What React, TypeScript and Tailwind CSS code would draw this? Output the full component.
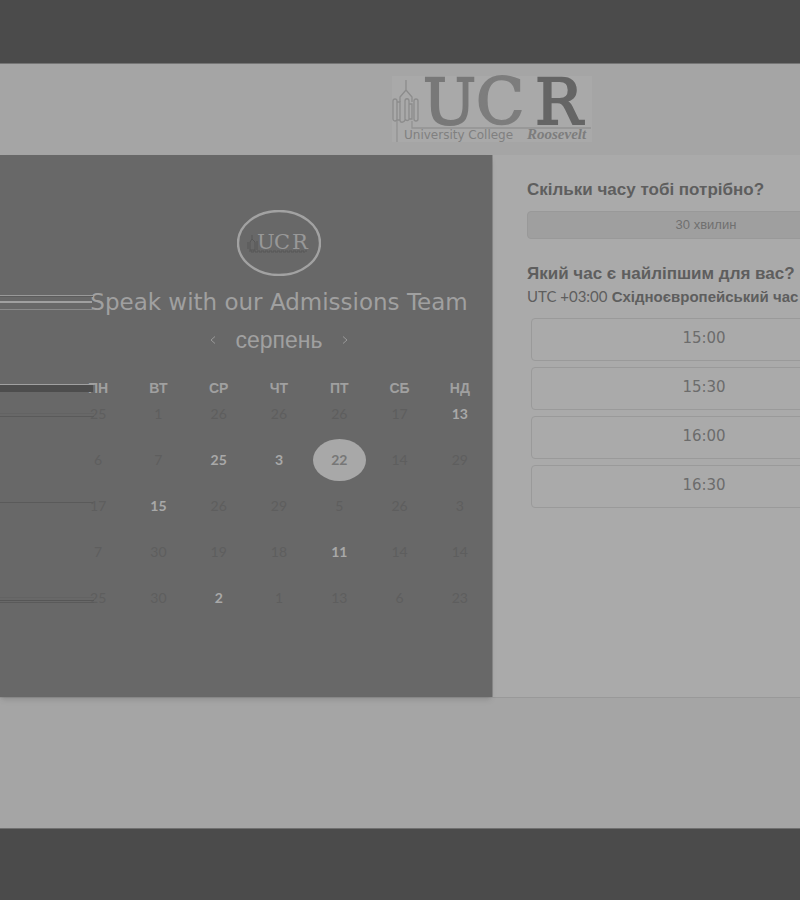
type Day = { n: number; on?: boolean; selected?: boolean };

const dayNames = ["ПН", "ВТ", "СР", "ЧТ", "ПТ", "СБ", "НД"];

const weeks: Day[][] = [
  [{ n: 25 }, { n: 1 }, { n: 26 }, { n: 26 }, { n: 26 }, { n: 17 }, { n: 13, on: true }],
  [{ n: 6 }, { n: 7 }, { n: 25, on: true }, { n: 3, on: true }, { n: 22, selected: true }, { n: 14 }, { n: 29 }],
  [{ n: 17 }, { n: 15, on: true }, { n: 26 }, { n: 29 }, { n: 5 }, { n: 26 }, { n: 3 }],
  [{ n: 7 }, { n: 30 }, { n: 19 }, { n: 18 }, { n: 11, on: true }, { n: 14 }, { n: 14 }],
  [{ n: 25 }, { n: 30 }, { n: 2, on: true }, { n: 1 }, { n: 13 }, { n: 6 }, { n: 23 }],
];

const times = ["15:00", "15:30", "16:00", "16:30"];

function Logo() {
  return (
    <svg className="overflow-visible" width="200" height="66" viewBox="0 0 200 66" role="img" aria-label="University College Roosevelt">
      <rect width="200" height="66" fill="#a9a9a9" />
      <g fill="none" stroke="#8c8c8c" strokeWidth="1.3">
        <path d="M14 4v10M14 14l-6 7v5M14 14l6 7v5" />
        <rect x="1" y="23" width="4" height="22" rx="2" />
        <path d="M5 26h3v18H5M8 44c0 3 4 3 5 0V25c0-3 4-3 4 0v18c0 2-3 2-4 0M17 28h3v15h-3" />
        <rect x="22" y="23" width="4" height="22" rx="2" />
        <path d="M5 45v21M20 45v7h179" stroke="#929292" />
      </g>
      <g fontFamily="'DejaVu Serif', serif" fontSize="63" strokeWidth="2">
        <text x="31" y="48" fill="#787878" stroke="#787878">U</text>
        <text x="84" y="48" fill="#7d7d7d" stroke="#7d7d7d">C</text>
        <text x="143" y="48" fill="#656565" stroke="#656565">R</text>
      </g>
      <text x="12" y="63" fontFamily="'DejaVu Sans', sans-serif" fontSize="12" fill="#808080">University College</text>
      <text x="135" y="63" fontFamily="'Liberation Serif', serif" fontStyle="italic" fontWeight="700" fontSize="15" fill="#7d7d7d">Roosevelt</text>
    </svg>
  );
}

function Badge() {
  return (
    <svg width="84" height="66" viewBox="0 0 84 66" role="img" aria-label="UCR">
      <ellipse cx="42" cy="33" rx="41" ry="32" fill="none" stroke="#a2a2a2" strokeWidth="2.4" />
      <g fill="none" stroke="#575757" strokeWidth="1">
        <path d="M15 25v4l-2 3v8h5v-8l-3-3M11 32v7M20 31v9" />
        <path d="M12 41h58M14 42h54" strokeDasharray="3 1" />
      </g>
      <g fontFamily="'DejaVu Serif', serif" fontSize="21" fill="#989898">
        <text x="20" y="39">U</text>
        <text x="37" y="39">C</text>
        <text x="55" y="39">R</text>
      </g>
    </svg>
  );
}

function Streaks() {
  return (
    <svg className="absolute left-0 top-0" width="100" height="460" aria-hidden="true">
      <g strokeWidth="1" fill="none">
        <path d="M0 140.500h93" stroke="#999999" />
        <path d="M0 141.500h93" stroke="#5c5c5c" />
        <path d="M0 147h92" stroke="#a0a0a0" strokeWidth="2" />
        <path d="M0 154.500h93" stroke="#8a8a8a" />
        <path d="M0 229.500h94" stroke="#a0a0a0" />
        <path d="M0 233.500h93" stroke="#4d4d4d" strokeWidth="7" />
        <path d="M0 261.500h94M0 347.500h93M0 447.500h94" stroke="#5a5a5a" />
        <path d="M0 258.500h94M0 442.500h94" stroke="#636363" />
        <path d="M0 445.500h94" stroke="#565656" />
      </g>
    </svg>
  );
}

function DayButton({ n, on, selected }: Day) {
  if (selected) {
    return (
      <button aria-pressed="true" className="-my-2 inline-flex h-[42px] w-[53px] items-center justify-center rounded-[50%] bg-[#a8a8a8] font-bold text-[#777777]">
        {n}
      </button>
    );
  }
  return (
    <button disabled={!on} className={on ? "h-[26px] w-8 font-bold text-[#a8a8a8]" : "h-[26px] w-8 text-[#5e5e5e]"}>
      {n}
    </button>
  );
}

export default function App() {
  return (
    <div className="flex min-h-screen flex-col overflow-x-hidden bg-[#4b4b4b] font-['Liberation_Sans',sans-serif]">
      <div className="h-[63px]" />
      <header className="flex h-[92px] justify-center border-t border-[#757575] bg-[#a5a5a5] pl-[184px] pt-3">
        <Logo />
      </header>
      <main className="flex h-[543px] border-b border-[#999999] bg-[#aaaaaa]">
        <section className="relative flex min-w-0 flex-1 flex-col items-center bg-[#686868] pl-[68px] pr-0.5 pt-[55px] text-[#a0a0a0] shadow-md">
          <Streaks />
          <Badge />
          <h1 className="mt-3 whitespace-nowrap font-['DejaVu_Sans',sans-serif] text-[23px] leading-7">Speak with our Admissions Team</h1>
          <div className="mt-3 flex h-6 items-center gap-[14px]">
            <button aria-label="Попередній місяць" className="flex h-4 w-4 items-center justify-center">
              <svg width="6" height="8" viewBox="0 0 6 8" fill="none" stroke="#999999"><path d="M5 .5 1 4l4 3.500" /></svg>
            </button>
            <h2 className="text-[23px] leading-6">серпень</h2>
            <button aria-label="Наступний місяць" className="flex h-4 w-4 items-center justify-center">
              <svg width="6" height="8" viewBox="0 0 6 8" fill="none" stroke="#999999"><path d="m1 .5 4 3.500-4 3.500" /></svg>
            </button>
          </div>
          <table className="mt-[23px] w-full table-fixed border-collapse text-center">
            <thead>
              <tr>
                {dayNames.map((d) => (
                  <th key={d} scope="col" className="h-[26px] p-0 text-[14px] leading-4">{d}</th>
                ))}
              </tr>
            </thead>
            <tbody className="font-['Lato',sans-serif] text-[14px] leading-4">
              {weeks.map((week, i) => (
                <tr key={i}>
                  {week.map((day, j) => (
                    <td key={j} className="h-[46px] p-0 align-top">
                      <div className="flex h-[26px] items-center justify-center"><DayButton {...day} /></div>
                    </td>
                  ))}
                </tr>
              ))}
            </tbody>
          </table>
        </section>
        <section className="w-[308px] shrink-0 overflow-hidden border-l border-[#8c8c8c] pl-[34px] pt-[26px] text-[#5e5e5e]">
          <div className="w-[358px]">
            <h2 className="whitespace-nowrap text-[17px] font-bold leading-[18px]">Скільки часу тобі потрібно?</h2>
            <button className="mt-3 h-7 w-full rounded-sm border border-[#999999] bg-[#9f9f9f] text-[13px] text-[#707070]">30 хвилин</button>
            <h2 className="mt-[26px] whitespace-nowrap text-[17px] font-bold leading-[18px]">Який час є найліпшим для вас?</h2>
            <p className="mt-1 whitespace-nowrap text-[15px] font-bold leading-[18px]">
              <span className="font-['Lato',sans-serif] font-normal">UTC +03:00</span> Східноєвропейський час
            </p>
            <div className="ml-1 mr-2 mt-3 flex flex-col gap-1.5">
              {times.map((t) => (
                <button key={t} className="h-[43px] w-full rounded-sm border border-[#9a9a9a] pb-0.5 font-['DejaVu_Sans',sans-serif] text-[15px] text-[#6c6c6c]">{t}</button>
              ))}
            </div>
          </div>
        </section>
      </main>
      <div className="h-[131px] border-b border-[#707070] bg-[#a5a5a5]" />
    </div>
  );
}
